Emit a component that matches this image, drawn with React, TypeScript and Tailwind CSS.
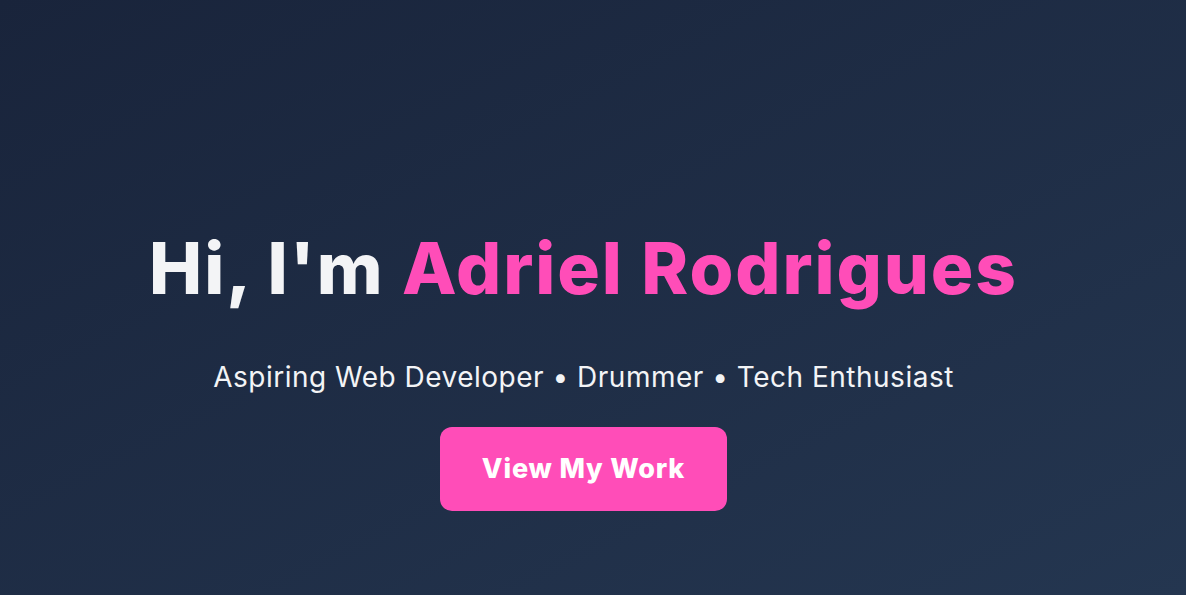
export default function App() {
  return (
    <div className="w-full h-[595px] overflow-hidden bg-gradient-to-br from-[#19243b] to-[#243650] flex flex-col items-center pr-[19px]" style={{ fontFamily: "Inter, 'Noto Sans', sans-serif" }}>
      <h1 className="mt-[222px] text-[71px] leading-[92px] font-extrabold tracking-[1.9px] text-[#f3f4f6] whitespace-nowrap">
        Hi, I'm <span className="text-[#ff4db8]">Adriel Rodrigues</span>
      </h1>
      <p className="mt-[43px] text-[28px] leading-[40px] tracking-[0.5px] text-[#f3f4f6] whitespace-nowrap">
        Aspiring Web Developer • Drummer • Tech Enthusiast
      </p>
      <button className="mt-[30px] w-[287px] h-[84px] rounded-[12px] bg-[#ff4db8] text-white text-[27px] font-extrabold tracking-[0.8px]">
        View My Work
      </button>
    </div>
  );
}
